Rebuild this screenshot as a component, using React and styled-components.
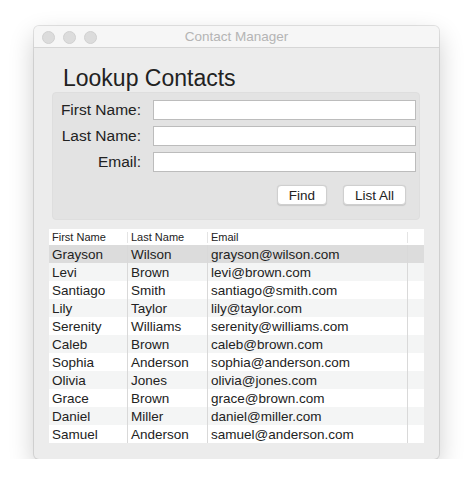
import React from "react";
import styled, { createGlobalStyle } from "styled-components";

const GlobalStyle = createGlobalStyle`
  html, body {
    margin: 0;
    background: #ffffff;
    font-family: "Liberation Sans", Arial, sans-serif;
  }
`;

const contacts = [
  ["Grayson", "Wilson", "grayson@wilson.com"],
  ["Levi", "Brown", "levi@brown.com"],
  ["Santiago", "Smith", "santiago@smith.com"],
  ["Lily", "Taylor", "lily@taylor.com"],
  ["Serenity", "Williams", "serenity@williams.com"],
  ["Caleb", "Brown", "caleb@brown.com"],
  ["Sophia", "Anderson", "sophia@anderson.com"],
  ["Olivia", "Jones", "olivia@jones.com"],
  ["Grace", "Brown", "grace@brown.com"],
  ["Daniel", "Miller", "daniel@miller.com"],
  ["Samuel", "Anderson", "samuel@anderson.com"],
];

const App = () => {
  return (
    <>
      <GlobalStyle />
      <Page>
        <Window>
          <TitleBar>
            <Lights>
              <Light />
              <Light />
              <Light />
            </Lights>
            <Title>Contact Manager</Title>
          </TitleBar>
          <Body>
            <Heading>Lookup Contacts</Heading>
            <Panel>
              <Field>
                <Label>First Name:</Label>
                <Input />
              </Field>
              <Field>
                <Label>Last Name:</Label>
                <Input />
              </Field>
              <Field>
                <Label>Email:</Label>
                <Input />
              </Field>
              <Buttons>
                <Button>Find</Button>
                <Button>List All</Button>
              </Buttons>
            </Panel>
            <Table>
              <HeaderRow>
                <HeadCell>First Name</HeadCell>
                <HeadCell>Last Name</HeadCell>
                <HeadCell>Email</HeadCell>
                <HeadCell last />
              </HeaderRow>
              {contacts.map(([first, last, email], i) => (
                <Row key={email} selected={i === 0} odd={i % 2 === 1}>
                  <Cell>{first}</Cell>
                  <Cell>{last}</Cell>
                  <Cell>{email}</Cell>
                  <Cell last />
                </Row>
              ))}
            </Table>
          </Body>
        </Window>
      </Page>
    </>
  );
};

export default App;

const Page = styled.div`
  padding: 26px 0 0 34px;
`;

const Window = styled.div`
  width: 405px;
  height: 433px;
  box-sizing: border-box;
  border-radius: 5px;
  background: #ececec;
  box-shadow: 0 0 0 1px rgba(0, 0, 0, 0.1), 0 10px 26px rgba(0, 0, 0, 0.2);
  overflow: hidden;
  display: flex;
  flex-direction: column;
`;

const TitleBar = styled.div`
  position: relative;
  height: 21px;
  flex-shrink: 0;
  background: #f6f6f6;
  border-bottom: 1px solid #d6d6d6;
  display: flex;
  align-items: center;
  justify-content: center;
`;

const Lights = styled.div`
  position: absolute;
  left: 8px;
  top: 5px;
  display: flex;
  gap: 8px;
`;

const Light = styled.span`
  width: 11px;
  height: 11px;
  border-radius: 50%;
  background: #dcdcdc;
  border: 0.5px solid #d0d0d0;
`;

const Title = styled.div`
  font-size: 13.5px;
  color: #b4b4b4;
`;

const Body = styled.div`
  flex: 1;
  display: flex;
  flex-direction: column;
  padding: 0 15px;
`;

const Heading = styled.div`
  font-size: 23px;
  line-height: 23px;
  color: #222;
  margin: 19px 0 0 14px;
  height: 25px;
`;

const Panel = styled.div`
  margin: 0 4px 0 3px;
  height: 128px;
  box-sizing: border-box;
  background: #e3e3e3;
  border: 1px solid #dedede;
  border-radius: 4px;
  padding: 7px 3px 0 0;
  display: flex;
  flex-direction: column;
  gap: 6px;
`;

const Field = styled.div`
  display: flex;
  align-items: center;
  gap: 12px;
`;

const Label = styled.div`
  width: 88px;
  text-align: right;
  font-size: 15.5px;
  color: #222;
`;

const Input = styled.div`
  flex: 1;
  height: 20px;
  box-sizing: border-box;
  background: #fff;
  border: 1px solid #bcbcbc;
`;

const Buttons = styled.div`
  display: flex;
  justify-content: flex-end;
  gap: 16px;
  margin-top: 7px;
  padding-right: 10px;
`;

const Button = styled.div`
  height: 20px;
  box-sizing: border-box;
  padding: 0 11px;
  display: flex;
  align-items: center;
  background: #fff;
  border: 1px solid #cfcfcf;
  border-radius: 4px;
  box-shadow: 0 0.5px 1px rgba(0, 0, 0, 0.12);
  font-size: 13.5px;
  color: #222;
`;

const Table = styled.div`
  margin-top: 9px;
  display: flex;
  flex-direction: column;
`;

const grid = `
  display: grid;
  grid-template-columns: 79px 80px 200px 1fr;
`;

const HeaderRow = styled.div`
  ${grid}
  height: 16px;
  background: #fff;
  align-items: center;
`;

const HeadCell = styled.div`
  font-size: 11px;
  color: #222;
  padding-left: 3px;
  height: 11px;
  line-height: 11px;
  border-right: ${(p) => (p.last ? "none" : "1px solid #e4e4e4")};
`;

const Row = styled.div`
  ${grid}
  height: 18px;
  overflow: hidden;
  background: ${(p) => (p.selected ? "#dcdcdc" : p.odd ? "#f4f5f5" : "#ffffff")};
`;

const Cell = styled.div`
  font-size: 13.5px;
  line-height: 20px;
  height: 18px;
  color: #222;
  padding-left: 3px;
  white-space: nowrap;
  overflow: hidden;
  border-right: ${(p) => (p.last ? "none" : "1px solid #d9d9d9")};
`;
